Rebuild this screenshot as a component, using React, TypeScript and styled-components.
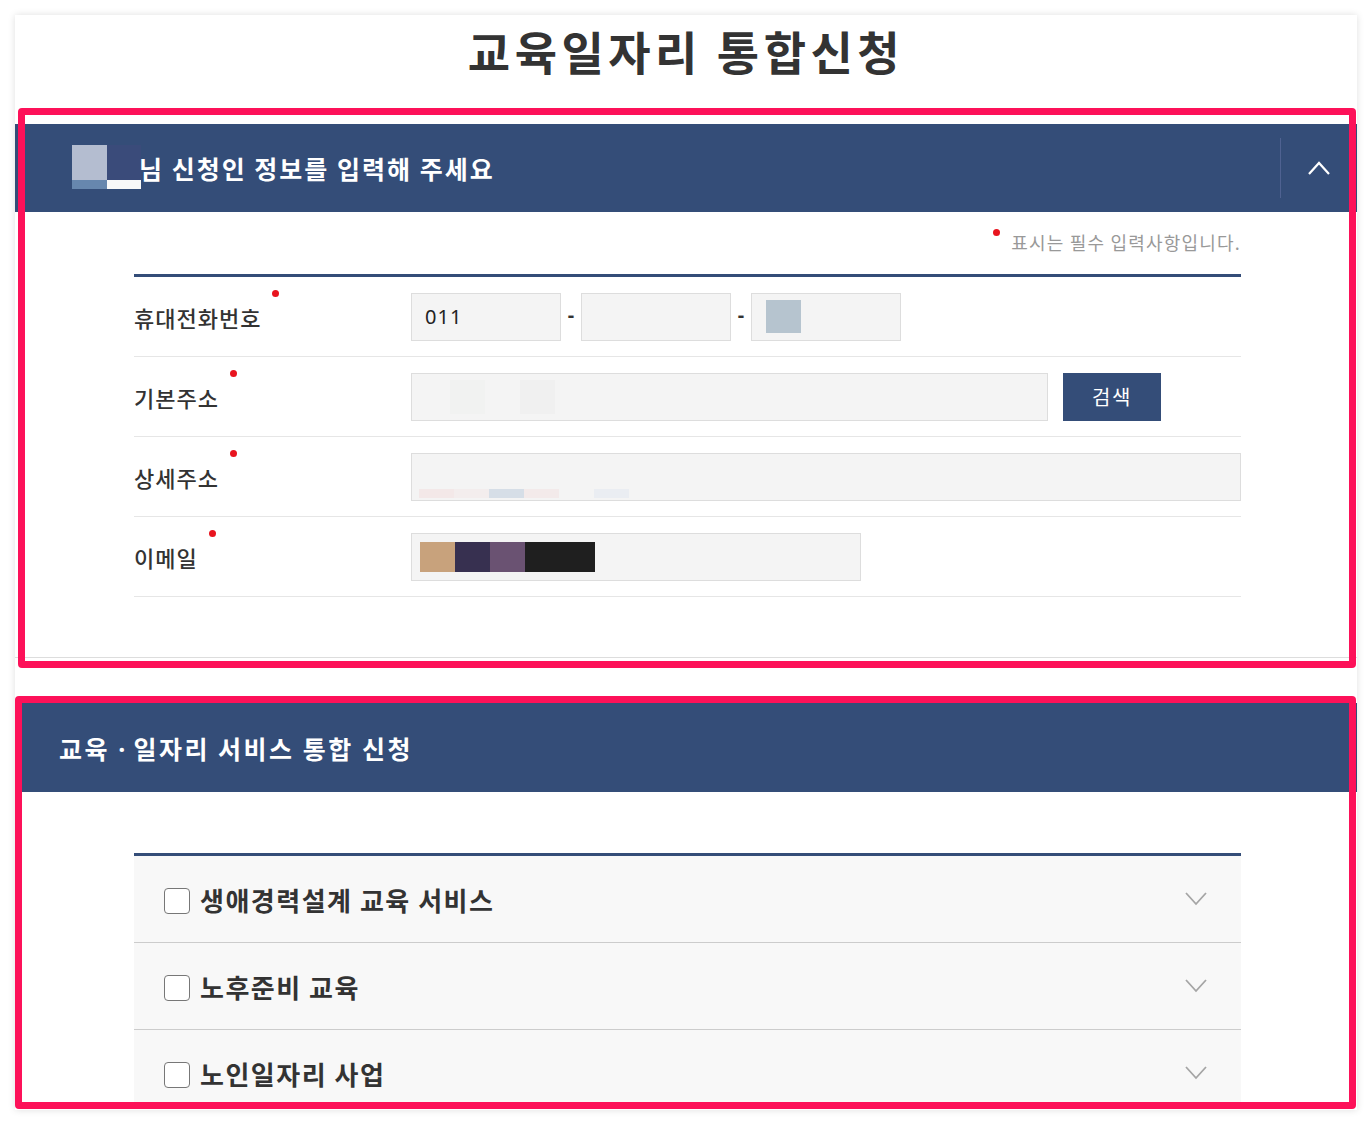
import styled, { createGlobalStyle } from "styled-components";

const NAVY = "#344d78";
const PINK = "#fd1159";
const RED = "#e8141e";

const GlobalStyle = createGlobalStyle`
  html, body {
    margin: 0;
    padding: 0;
    background: #fff;
  }
  body {
    font-family: "Noto Sans CJK KR", "Noto Sans", sans-serif;
    color: #333;
  }
`;

type Cell = { w: number; c: string };

function Mosaic({ cells, h }: { cells: Cell[]; h: number }) {
  return (
    <MosaicRow>
      {cells.map((cell, i) => (
        <MosaicCell key={i} style={{ width: cell.w, height: h, background: cell.c }} />
      ))}
    </MosaicRow>
  );
}

function Chevron({ up, color }: { up?: boolean; color: string }) {
  return (
    <svg width="22" height="14" viewBox="0 0 22 14">
      <polyline
        points={up ? "1,13 11,2 21,13" : "1,1 11,12 21,1"}
        fill="none"
        stroke={color}
        strokeWidth={up ? 2.2 : 1.8}
      />
    </svg>
  );
}

const services = ["생애경력설계 교육 서비스", "노후준비 교육", "노인일자리 사업"];

function App() {
  return (
    <Page>
      <GlobalStyle />
      <Card>
        <Title>교육일자리 통합신청</Title>

        <Annotated $top={-16} $left={3} $right={1} $bottom={-10}>
          <Section>
            <Header>
              <HeaderTitle>
                <NameBlur>
                  <Mosaic cells={[{ w: 35, c: "#b4bdd0" }, { w: 34, c: "#3a4b7a" }]} h={35} />
                  <Mosaic cells={[{ w: 35, c: "#6787ae" }, { w: 34, c: "#f8f8f8" }]} h={9} />
                </NameBlur>
                <HeaderText>님 신청인 정보를 입력해 주세요</HeaderText>
              </HeaderTitle>
              <Toggle>
                <Chevron up color="#fff" />
              </Toggle>
            </Header>

            <FormBody>
              <Notice>
                <Dot $top={0} $gap={0} />
                <NoticeText>표시는 필수 입력사항입니다.</NoticeText>
              </Notice>

              <FormTable>
                <FormRow>
                  <Label>
                    휴대전화번호
                    <Dot $top={-12} $gap={11} />
                  </Label>
                  <Inline>
                    <Field $w={150}>
                      <FieldText>011</FieldText>
                    </Field>
                    <Sep>-</Sep>
                    <Field $w={150} />
                    <Sep>-</Sep>
                    <Field $w={150} $pad={14}>
                      <Mosaic cells={[{ w: 35, c: "#b6c4cf" }]} h={33} />
                    </Field>
                  </Inline>
                </FormRow>

                <FormRow>
                  <Label>
                    기본주소
                    <Dot $top={-12} $gap={11} />
                  </Label>
                  <Inline>
                    <Field $w={637} $pad={38}>
                      <Mosaic
                        cells={[
                          { w: 35, c: "#f1f2f1" },
                          { w: 35, c: "#f4f4f4" },
                          { w: 35, c: "#f0f0f0" },
                        ]}
                        h={34}
                      />
                    </Field>
                    <SearchButton>검색</SearchButton>
                  </Inline>
                </FormRow>

                <FormRow>
                  <Label>
                    상세주소
                    <Dot $top={-12} $gap={11} />
                  </Label>
                  <Field $pad={7} $align="flex-end">
                    <FaintStrip>
                      <Mosaic
                        cells={[
                          { w: 35, c: "#f3e8e8" },
                          { w: 35, c: "#f3eded" },
                          { w: 35, c: "#d6dee7" },
                          { w: 35, c: "#f3eaea" },
                          { w: 35, c: "transparent" },
                          { w: 35, c: "#eaedf2" },
                        ]}
                        h={9}
                      />
                    </FaintStrip>
                  </Field>
                </FormRow>

                <FormRow>
                  <Label>
                    이메일
                    <Dot $top={-12} $gap={11} />
                  </Label>
                  <Field $w={450} $pad={8}>
                    <Mosaic
                      cells={[
                        { w: 35, c: "#c8a27c" },
                        { w: 35, c: "#373050" },
                        { w: 35, c: "#6a5272" },
                        { w: 70, c: "#1f1f1f" },
                      ]}
                      h={30}
                    />
                  </Field>
                </FormRow>
              </FormTable>
            </FormBody>
          </Section>
        </Annotated>

        <Annotated $top={-7} $left={0} $right={1} $bottom={0} $gapTop={45}>
          <ServiceSection>
            <Header $h={89}>
              <ServiceTitle>
                교육 <Mid>·</Mid> 일자리 서비스 통합 신청
              </ServiceTitle>
            </Header>
            <ServiceBody>
              <ServiceList>
                {services.map((s) => (
                  <ServiceRow key={s}>
                    <Check type="checkbox" />
                    <ServiceLabel>{s}</ServiceLabel>
                    <Chevron color="#a5a5a5" />
                  </ServiceRow>
                ))}
              </ServiceList>
            </ServiceBody>
          </ServiceSection>
        </Annotated>
      </Card>
    </Page>
  );
}

export default App;

const Page = styled.div`
  padding: 15px 14px 0 15px;
  height: 1124px;
  box-sizing: border-box;
  overflow: hidden;
`;

const Card = styled.div`
  height: 1095px;
  padding-top: 5px;
  box-sizing: border-box;
  background: #fff;
  box-shadow: 0 0 7px rgba(0, 0, 0, 0.13);
`;

const Title = styled.h1`
  margin: 0 0 44px;
  font-size: 46px;
  line-height: 60px;
  font-weight: 700;
  letter-spacing: 4.5px;
  text-align: center;
  color: #333;
`;

const Annotated = styled.div<{
  $top: number;
  $left: number;
  $right: number;
  $bottom: number;
  $gapTop?: number;
}>`
  position: relative;
  margin-top: ${(p) => p.$gapTop ?? 0}px;

  &::after {
    content: "";
    position: absolute;
    top: ${(p) => p.$top}px;
    left: ${(p) => p.$left}px;
    right: ${(p) => p.$right}px;
    bottom: ${(p) => p.$bottom}px;
    border: 7px solid ${PINK};
    border-radius: 4px;
    pointer-events: none;
  }
`;

const Section = styled.section`
  border-bottom: 1px solid #ddd;
`;

const Header = styled.div<{ $h?: number }>`
  display: flex;
  align-items: center;
  justify-content: space-between;
  height: ${(p) => p.$h ?? 88}px;
  background: ${NAVY};
  color: #fff;
`;

const HeaderTitle = styled.div`
  display: flex;
  align-items: center;
  padding-left: 57px;
`;

const NameBlur = styled.div`
  display: flex;
  flex-direction: column;
  margin-top: -2px;
`;

const HeaderText = styled.span`
  margin-left: -2px;
  font-size: 25px;
  font-weight: 700;
  letter-spacing: 2px;
`;

const Toggle = styled.div`
  display: flex;
  align-items: center;
  justify-content: center;
  width: 76px;
  height: 60px;
  border-left: 1px solid #4f6291;
`;

const MosaicRow = styled.div`
  display: flex;
`;

const MosaicCell = styled.span`
  display: block;
`;

const FormBody = styled.div`
  padding: 17px 116px 60px 119px;
`;

const Notice = styled.div`
  display: flex;
  justify-content: flex-end;
  align-items: flex-start;
  margin-bottom: 19px;
`;

const NoticeText = styled.span`
  margin-left: 11px;
  font-size: 18px;
  line-height: 26px;
  letter-spacing: 1.2px;
  color: #999;
`;

const Dot = styled.span<{ $top: number; $gap: number }>`
  display: inline-block;
  position: relative;
  top: ${(p) => p.$top}px;
  width: 7px;
  height: 7px;
  margin-left: ${(p) => p.$gap}px;
  border-radius: 50%;
  background: ${RED};
  vertical-align: top;
`;

const FormTable = styled.div`
  border-top: 3px solid ${NAVY};
`;

const FormRow = styled.div`
  display: grid;
  grid-template-columns: 277px 1fr;
  align-items: center;
  height: 80px;
  box-sizing: border-box;
  border-bottom: 1px solid #e6e6e6;
`;

const Label = styled.div`
  font-size: 22px;
  line-height: 30px;
  font-weight: 500;
  letter-spacing: 1px;
  color: #333;
`;

const Inline = styled.div`
  display: flex;
  align-items: center;
`;

const Field = styled.div<{ $w?: number; $pad?: number; $align?: string }>`
  display: flex;
  align-items: ${(p) => p.$align ?? "center"};
  width: ${(p) => (p.$w ? `${p.$w}px` : "100%")};
  height: 48px;
  box-sizing: border-box;
  padding-left: ${(p) => p.$pad ?? 13}px;
  border: 1px solid #ddd;
  background: #f4f4f4;
`;

const FaintStrip = styled.div`
  padding-bottom: 2px;
`;

const FieldText = styled.span`
  font-family: "Noto Sans", sans-serif;
  font-size: 20px;
  letter-spacing: 1px;
  color: #222;
`;

const Sep = styled.span`
  width: 20px;
  margin-top: -4px;
  text-align: center;
  font-family: "Noto Sans", sans-serif;
  font-size: 20px;
  font-weight: 700;
  color: #333;
`;

const SearchButton = styled.button`
  width: 98px;
  height: 48px;
  margin-left: 15px;
  border: none;
  background: ${NAVY};
  color: #fff;
  font-family: "Noto Sans CJK KR", sans-serif;
  font-size: 20px;
  letter-spacing: 1.5px;
`;

const ServiceSection = styled.section`
  height: 406px;
  overflow: hidden;
`;

const ServiceTitle = styled.h2`
  margin: 0;
  padding-left: 44px;
  font-size: 25px;
  font-weight: 700;
  letter-spacing: 2.5px;
`;

const Mid = styled.span`
  font-family: "Noto Sans", sans-serif;
  letter-spacing: 0;
`;

const ServiceBody = styled.div`
  padding: 61px 116px 0 119px;
`;

const ServiceList = styled.div`
  border-top: 3px solid ${NAVY};
`;

const ServiceRow = styled.div`
  display: flex;
  align-items: center;
  height: 87px;
  box-sizing: border-box;
  padding: 0 34px 0 30px;
  border-bottom: 1px solid #ccc;
  background: #f8f8f8;
`;

const Check = styled.input`
  appearance: none;
  width: 26px;
  height: 26px;
  margin: 4px 10px 0 0;
  border: 1.5px solid #777;
  border-radius: 4px;
  background: #fff;
`;

const ServiceLabel = styled.span`
  flex: 1;
  font-size: 26px;
  font-weight: 700;
  letter-spacing: 1.5px;
  color: #333;
`;
